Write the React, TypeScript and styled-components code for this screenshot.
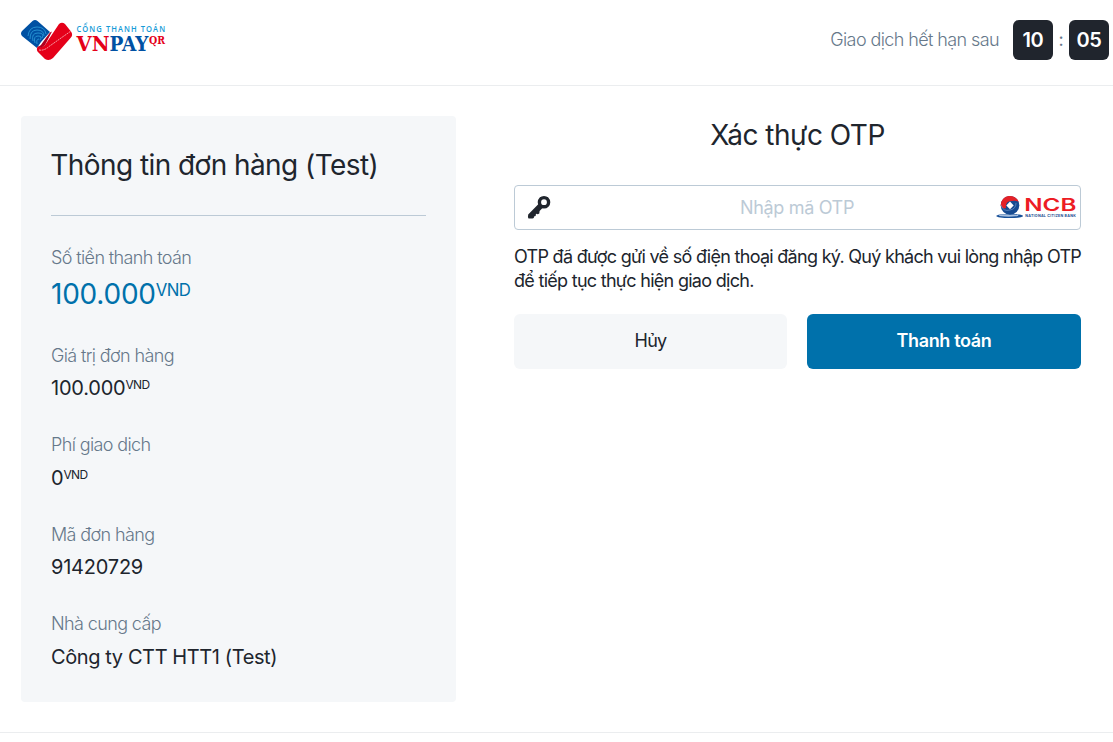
import React from 'react';
import styled, { createGlobalStyle } from 'styled-components';

const GlobalStyle = createGlobalStyle`
  *, *::before, *::after { box-sizing: border-box; }
  body { margin: 0; background: #fff; color: #20252d; font-family: Inter, "Liberation Sans", sans-serif; font-size: 18px; line-height: 24px; overflow: hidden; }
  h1, h2, p, dl, dd, dt { margin: 0; font-weight: 400; }
`;

const Page = styled.div`
  height: 733px;
  border-bottom: 1px solid #ebedef;
`;

const Header = styled.header`
  display: flex;
  align-items: flex-start;
  justify-content: space-between;
  height: 86px;
  padding: 20px 4px 0 21px;
  border-bottom: 1px solid #ebedef;
`;

const Countdown = styled.div`
  display: flex;
  align-items: center;
  color: #66788a;
  font-weight: 300;
`;

const CountdownLabel = styled.span`
  margin-right: 14px;
  letter-spacing: -0.6px;
`;

const TimeBox = styled.span`
  width: 40px;
  height: 40px;
  border-radius: 6px;
  background: #20252d;
  color: #fff;
  font-size: 20px;
  font-weight: 600;
  line-height: 40px;
  letter-spacing: -0.4px;
  text-align: center;
`;

const Colon = styled.span`
  width: 16px;
  text-align: center;
  font-weight: 400;
`;

const Main = styled.main`
  display: flex;
  align-items: flex-start;
  gap: 58px;
  padding: 30px 32px 0 21px;
`;

const OrderPanel = styled.section`
  width: 435px;
  height: 586px;
  padding: 30px;
  border-radius: 4px;
  background: #f5f7f9;
`;

const PanelTitle = styled.h1`
  height: 70px;
  border-bottom: 1px solid #bccad6;
  font-size: 28px;
  line-height: 38px;
  letter-spacing: -0.57px;
  text-indent: -0.7px;
`;

const OrderList = styled.dl`
  padding-top: 30px;
`;

const OrderItem = styled.div<{ $large?: boolean }>`
  height: ${p => (p.$large ? 97.6 : 89.5)}px;
`;

const OrderLabel = styled.dt`
  color: #66788a;
  font-weight: 300;
  letter-spacing: -0.62px;
`;

const OrderValue = styled.dd<{ $large?: boolean; $text?: boolean }>`
  margin-top: ${p => (p.$large ? 4 : 5.6)}px;
  color: ${p => (p.$large ? '#0071ab' : '#20252d')};
  font-size: ${p => (p.$large ? 28 : 20)}px;
  line-height: ${p => (p.$large ? 40 : 30)}px;
  letter-spacing: ${p => (p.$text ? -0.4 : -0.22)}px;
`;

const Currency = styled.sup`
  font-size: 60%;
  line-height: 0;
  vertical-align: baseline;
  position: relative;
  top: -0.48em;
  letter-spacing: -0.6px;
`;

const OtpSection = styled.section`
  flex: 1;
`;

const OtpTitle = styled.h2`
  height: 69px;
  font-size: 28px;
  line-height: 38px;
  letter-spacing: -0.5px;
  text-align: center;
`;

const OtpField = styled.label`
  display: flex;
  align-items: center;
  height: 45px;
  padding: 0 3px 0 12px;
  border: 1px solid #bccad6;
  border-radius: 4px;
`;

const OtpInput = styled.input`
  flex: 1;
  min-width: 0;
  padding: 0 0 0 46px;
  border: 0;
  outline: 0;
  background: transparent;
  font: inherit;
  letter-spacing: -0.32px;
  text-align: center;
  &::placeholder { color: #bccad6; opacity: 1; }
`;

const Notice = styled.p`
  margin-right: -8px;
  padding-top: 15px;
  letter-spacing: -0.71px;
`;

const Actions = styled.div`
  display: grid;
  grid-template-columns: 273px 274px;
  gap: 20px;
  padding-top: 21px;
`;

const Button = styled.button<{ $primary?: boolean }>`
  height: 55px;
  padding: 0 0 2px;
  border: 0;
  border-radius: 6px;
  background: ${p => (p.$primary ? '#0071ab' : '#f5f7f9')};
  color: ${p => (p.$primary ? '#fff' : '#20252d')};
  font: inherit;
  font-weight: ${p => (p.$primary ? 600 : 400)};
  letter-spacing: ${p => (p.$primary ? -0.35 : -0.7)}px;
`;

const Logo = styled.svg`
  overflow: visible;
`;

const VnpayLogo = () => (
  <Logo width="147" height="42" viewBox="0 0 147 42" role="img" aria-label="VNPAY QR">
    <path d="M11.5 1Q14-1 16.5 1L29 12L20 22Q18 25 16 28L1 16Q-1 13.5 1 11Z" fill="#0051a3" />
    <g fill="none" stroke="#2f9fdc" strokeWidth="0.8">
      <path d="M7 16Q8 7 16 7T25 14M9 19Q9 10 16 10T23 16M12 21Q10 13 17 13T21 18M14 23Q12 16 17 16T19 20M16 24Q15 19 18 19" />
    </g>
    <path d="M38 4Q41 1.5 44 4L50 11.5Q52.5 15 49.5 18L32 38Q28 41.5 24 39L16.5 31.5Q15 29 17 26Q19 29 24 25Z" fill="#e50019" />
    <path d="M17 27Q20 26 22 22L29 12.5L31 11.5L24 25Q20 29 17 27Z" fill="#b00020" />
    <path d="M18 30Q23 31 28 26.5L50 11" fill="none" stroke="#fff" strokeWidth="0.6" strokeDasharray="2 0.7" />
    <g transform="translate(55.5 11.6) scale(0.86 1)">
      <text fill="#169bd7" fontFamily="Open Sans, sans-serif" fontSize="8.8" fontWeight="600" textLength="103">CỔNG THANH TOÁN</text>
    </g>
    <g fontFamily="DejaVu Serif, serif" fontWeight="700">
      <text x="55.5" y="30.7" fill="#e50019" fontSize="19.5" textLength="33" lengthAdjust="spacingAndGlyphs">VN</text>
      <text x="88.5" y="30.7" fill="#0051a3" fontSize="19.5" textLength="39" lengthAdjust="spacingAndGlyphs">PAY</text>
      <text x="128" y="24.3" fill="#e50019" fontSize="10.5" textLength="16" lengthAdjust="spacingAndGlyphs">QR</text>
    </g>
  </Logo>
);

const KeyIcon = () => (
  <svg width="26" height="26" viewBox="0 0 26 26" aria-hidden="true">
    <circle cx="17" cy="7.2" r="4.6" fill="none" stroke="#20252d" strokeWidth="3.4" />
    <path d="M11.5 9L15.5 13L12.6 15.9L12.3 18.5L10.8 19.2L9 18.8L8.6 21L7 21.5L6.8 23L5.5 23.5H1.5Q.5 22.5 1.2 19.5Z" fill="#20252d" />
  </svg>
);

const NcbLogo = () => (
  <Logo width="82" height="26" viewBox="0 0 82 26" role="img" aria-label="National Citizen Bank">
    <ellipse cx="14.7" cy="21" rx="13.3" ry="2.1" fill="#164f98" />
    <ellipse cx="13.5" cy="20.5" rx="10" ry="1.2" fill="#a9c1df" />
    <circle cx="15" cy="10.4" r="9.3" fill="#174b91" />
    <path d="M5.7 10.4A9.3 9.3 0 0 1 23.8 7.2Q21 5 17 6Q10 6 11 13Q8 14.5 5.7 10.4Z" fill="#e42127" />
    <path d="M6 10Q8 17 15 15Q21 14 21 8" fill="none" stroke="#7fa3cf" strokeWidth="0.6" />
    <path d="M15 6.5L18.7 10.4L15 14.3L11.3 10.4Z" fill="#fff" />
    <text x="29.3" y="16.3" fill="#ed1c24" fontFamily="Inter, sans-serif" fontSize="17" fontWeight="600" textLength="52" lengthAdjust="spacingAndGlyphs">NCB</text>
    <text x="30.3" y="21.9" fill="#174b91" fontFamily="Inter, sans-serif" fontSize="3.6" fontWeight="700" textLength="50.5">NATIONAL CITIZEN BANK</text>
  </Logo>
);

const orders = [
  { label: 'Số tiền thanh toán', value: '100.000', currency: true, large: true },
  { label: 'Giá trị đơn hàng', value: '100.000', currency: true },
  { label: 'Phí giao dịch', value: '0', currency: true },
  { label: 'Mã đơn hàng', value: '91420729' },
  { label: 'Nhà cung cấp', value: 'Công ty CTT HTT1 (Test)', text: true },
];

export default function App() {
  return (
    <Page>
      <GlobalStyle />
      <Header>
        <VnpayLogo />
        <Countdown>
          <CountdownLabel>Giao dịch hết hạn sau</CountdownLabel>
          <TimeBox>10</TimeBox>
          <Colon>:</Colon>
          <TimeBox>05</TimeBox>
        </Countdown>
      </Header>
      <Main>
        <OrderPanel>
          <PanelTitle>Thông tin đơn hàng (Test)</PanelTitle>
          <OrderList>
            {orders.map(o => (
              <OrderItem key={o.label} $large={o.large}>
                <OrderLabel>{o.label}</OrderLabel>
                <OrderValue $large={o.large} $text={o.text}>
                  {o.value}
                  {o.currency && <Currency>VND</Currency>}
                </OrderValue>
              </OrderItem>
            ))}
          </OrderList>
        </OrderPanel>
        <OtpSection>
          <OtpTitle>Xác thực OTP</OtpTitle>
          <OtpField>
            <KeyIcon />
            <OtpInput placeholder="Nhập mã OTP" />
            <NcbLogo />
          </OtpField>
          <Notice>OTP đã được gửi về số điện thoại đăng ký. Quý khách vui lòng nhập OTP để tiếp tục thực hiện giao dịch.</Notice>
          <Actions>
            <Button>Hủy</Button>
            <Button $primary>Thanh toán</Button>
          </Actions>
        </OtpSection>
      </Main>
    </Page>
  );
}
